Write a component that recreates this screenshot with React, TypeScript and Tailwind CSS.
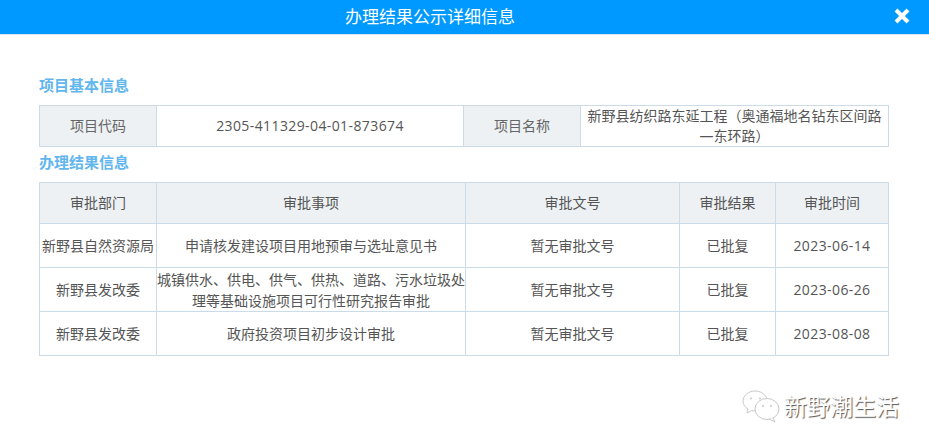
const rows = [
  { dept: "新野县自然资源局", item: "申请核发建设项目用地预审与选址意见书", date: "2023-06-14" },
  { dept: "新野县发改委", item: "城镇供水、供电、供气、供热、道路、污水垃圾处理等基础设施项目可行性研究报告审批", date: "2023-06-26" },
  { dept: "新野县发改委", item: "政府投资项目初步设计审批", date: "2023-08-08" },
];

const font = "font-['Open_Sans','Noto_Sans_CJK_SC',sans-serif]";
const th = "border border-[#cbdbe7] bg-[#edf1f4] p-0 text-center font-normal text-[#555]";
const td = "border border-[#cbdbe7] p-0 text-center font-normal text-[#555]";
const heading = "text-[15px] font-bold leading-5 text-[#62b6ee]";

const WechatMark = () => (
  <svg width="38" height="34" viewBox="0 0 38 34" fill="none" stroke="#c9c9c9" strokeWidth="1">
    <path d="M13 2C6.500 2 1 6.500 1 12c0 3.500 2 6.300 5 8l-1 4 5-2.500c1 .2 2 .4 3 .4" fill="#fff" />
    <path d="M13 2c6 0 11 3.500 12 8.500" />
    <circle cx="9" cy="9.500" r="1" fill="#c9c9c9" stroke="none" />
    <circle cx="18" cy="9.500" r="1" fill="#c9c9c9" stroke="none" />
    <ellipse cx="25" cy="20" rx="12" ry="10.500" fill="#fff" />
    <path d="M31 29l2 4-6-3" fill="#fff" />
    <circle cx="21" cy="17" r="1" fill="#c9c9c9" stroke="none" />
    <circle cx="29" cy="17" r="1" fill="#c9c9c9" stroke="none" />
  </svg>
);

export default function App() {
  return (
    <div className={`relative h-[448px] w-[929px] overflow-hidden bg-white text-sm ${font}`}>
      <header className="relative flex h-[35px] items-center justify-center border-b border-[#d9e6f0] bg-[#0099ff] pr-[69px] text-[17px] text-white">
        办理结果公示详细信息
        <button className="absolute right-[19px] top-[8px] text-white">
          <svg width="16" height="16" viewBox="0 0 16 16" stroke="currentColor" strokeWidth="4">
            <path d="M2 2l12 12M14 2L2 14" />
          </svg>
        </button>
      </header>

      <main className="px-[39px] pt-[40px]">
        <h3 className={`mb-[10px] ${heading}`}>项目基本信息</h3>
        <table className="w-[850px] table-fixed border-collapse">
          <colgroup>
            <col className="w-[117px]" />
            <col className="w-[307px]" />
            <col className="w-[117px]" />
            <col />
          </colgroup>
          <tbody>
            <tr className="h-[41px]">
              <td className={`${th} text-[#666]`}>项目代码</td>
              <td className={`${td} text-[#333] tracking-[0.4px]`}>2305-411329-04-01-873674</td>
              <td className={`${th} text-[#666]`}>项目名称</td>
              <td className={`${td} leading-[20px]`}>新野县纺织路东延工程（奥通福地名钻东区间路—东环路）</td>
            </tr>
          </tbody>
        </table>

        <h3 className={`mb-[10px] mt-[5px] ${heading}`}>办理结果信息</h3>
        <table className="w-[850px] table-fixed border-collapse">
          <colgroup>
            <col className="w-[117px]" />
            <col className="w-[309px]" />
            <col className="w-[214px]" />
            <col className="w-[96px]" />
            <col />
          </colgroup>
          <thead>
            <tr className="h-[41px]">
              <th className={th}>审批部门</th>
              <th className={th}>审批事项</th>
              <th className={th}>审批文号</th>
              <th className={th}>审批结果</th>
              <th className={th}>审批时间</th>
            </tr>
          </thead>
          <tbody>
            {rows.map((r) => (
              <tr key={r.date} className="h-[44px]">
                <td className={td}>{r.dept}</td>
                <td className={`${td} leading-[21px]`}>{r.item}</td>
                <td className={td}>暂无审批文号</td>
                <td className={td}>已批复</td>
                <td className={`${td} tracking-[0.4px]`}>{r.date}</td>
              </tr>
            ))}
          </tbody>
        </table>
      </main>

      <div className="absolute left-[742px] top-[389px] flex items-center gap-[4px] text-[23px] leading-[34px] text-white [text-shadow:1px_1px_1px_#555]">
        <WechatMark />
        <span>新野潮生活</span>
      </div>
    </div>
  );
}
